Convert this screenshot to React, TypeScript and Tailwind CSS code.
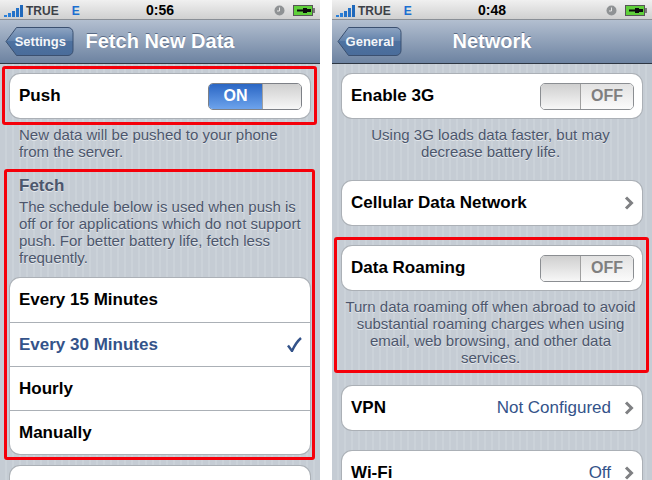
import type { ReactNode } from 'react';

function Signal() {
  return (
    <svg width="20" height="14" viewBox="0 0 20 14" className="shrink-0">
      <rect x="0" y="11" width="3" height="2" fill="#2a7fd8" />
      <rect x="4" y="9" width="3" height="4" fill="#2a7fd8" />
      <rect x="8" y="7" width="3" height="6" fill="#2472c8" />
      <rect x="12" y="4" width="3" height="9" fill="#2472c8" />
      <rect x="16" y="1" width="3" height="12" fill="#1f68bb" />
    </svg>
  );
}

function Clock() {
  return (
    <svg width="11" height="11" viewBox="0 0 11 11">
      <circle cx="5.5" cy="5.5" r="5" fill="#8f9294" />
      <path d="M5.5 2.5V6H3" stroke="#e6e6e6" strokeWidth="1" fill="none" />
    </svg>
  );
}

function Battery() {
  return (
    <svg width="23" height="11" viewBox="0 0 23 11">
      <rect x="0.5" y="0.5" width="19" height="10" fill="#5fd03a" stroke="#555" />
      <rect x="20" y="3" width="2" height="5" fill="#777" />
      <path d="M4 4.5H10V3H14V4H18V7H14V8H10V6.5H4Z" fill="#0b0b0b" />
    </svg>
  );
}

function StatusBar({ time }: { time: string }) {
  return (
    <div className="h-[20px] shrink-0 grid grid-cols-[1fr_auto_1fr] items-center px-[4px] bg-gradient-to-b from-[#f0f0f0] to-[#d0d0d0] border-b border-[#8a8f96]">
      <div className="flex items-center">
        <Signal />
        <span className="ml-[2px] text-[12px] font-bold text-[#3d4148]">TRUE</span>
        <span className="ml-[13px] text-[12px] font-bold text-[#1c6fd0]">E</span>
      </div>
      <span className="text-[14px] font-bold text-black">{time}</span>
      <div className="flex items-center justify-end gap-[8px]">
        <Clock />
        <Battery />
      </div>
    </div>
  );
}

function BackButton({ label, width, className }: { label: string; width: number; className: string }) {
  const d = `M11.5 .5H${width - 6}a5 5 0 0 1 5 5V23.5a5 5 0 0 1-5 5H11.5L1 14.5Z`;
  return (
    <div className={`relative h-[29px] flex items-center justify-end pr-[8px] ${className}`}>
      <svg width={width} height="29" viewBox={`0 0 ${width} 29`} className="absolute left-0 top-0">
        <defs>
          <linearGradient id={`back-${label}`} x1="0" y1="0" x2="0" y2="1">
            <stop offset="0" stopColor="#8ea4c2" />
            <stop offset="0.5" stopColor="#5f80aa" />
            <stop offset="0.5" stopColor="#4e72a0" />
            <stop offset="1" stopColor="#4a6c9a" />
          </linearGradient>
        </defs>
        <path d={d} fill={`url(#back-${label})`} stroke="#3b5070" />
      </svg>
      <span className="relative text-[13px] font-bold text-[#f4f6f9]">{label}</span>
    </div>
  );
}

function NavBar({ title, back, backWidth, backClass }: { title: string; back: string; backWidth: number; backClass: string }) {
  return (
    <div className="h-[44px] shrink-0 grid grid-cols-[1fr_auto_1fr] items-center px-[5px] bg-gradient-to-b from-[#b3bfd0] to-[#6d83a1] border-b border-[#2d3642]">
      <BackButton label={back} width={backWidth} className={backClass} />
      <h1 className="text-[20px] font-bold text-white pb-[2px] [text-shadow:0_-1px_0_#5a6b85]">{title}</h1>
      <div />
    </div>
  );
}

function Toggle({ on }: { on: boolean }) {
  return on ? (
    <div className="w-[94px] h-[27px] flex rounded-[5px] border border-[#7d8086] overflow-hidden">
      <div className="w-[53px] flex items-center justify-center text-[16px] font-bold text-white bg-gradient-to-b from-[#2a66c4] to-[#6da3ec]">ON</div>
      <div className="flex-1 bg-gradient-to-b from-[#cfcfcf] to-[#f7f7f7] border-l border-[#a0a0a0]" />
    </div>
  ) : (
    <div className="w-[94px] h-[27px] flex rounded-[5px] border border-[#8b8e92] overflow-hidden">
      <div className="w-[40px] bg-gradient-to-b from-[#cfcfcf] to-[#f7f7f7] border-r border-[#a0a0a0]" />
      <div className="flex-1 flex items-center justify-center text-[16px] font-bold text-[#7f7f7f] bg-gradient-to-b from-[#e2e2e2] to-[#fbfbfb]">OFF</div>
    </div>
  );
}

function Chevron() {
  return (
    <svg width="10" height="14" viewBox="0 0 10 14" className="shrink-0">
      <path d="M2 1.5L7.5 7L2 12.5" stroke="#7f8083" strokeWidth="3" fill="none" />
    </svg>
  );
}

function Check() {
  return (
    <svg width="15" height="15" viewBox="0 0 15 15" className="shrink-0">
      <path d="M1 8.5L5 14C7.5 8.5 10 4.5 14 1" stroke="#34538a" strokeWidth="2.4" fill="none" />
    </svg>
  );
}

function Row({ label, right, blue, divided }: { label: string; right?: ReactNode; blue?: boolean; divided?: boolean }) {
  return (
    <div className={`h-[44px] flex items-center justify-between pl-[9px] pr-[8px] text-[17px] font-bold ${blue ? 'text-[#34538a]' : 'text-black'} ${divided ? 'border-t border-[#abb0b6]' : ''}`}>
      <span>{label}</span>
      {right}
    </div>
  );
}

function Card({ children, className = '' }: { children?: ReactNode; className?: string }) {
  return (
    <div className={`shrink-0 bg-white ring-1 ring-[#abb0b6] rounded-[10px] overflow-hidden ${className}`}>{children}</div>
  );
}

function Note({ children, className = '' }: { children: ReactNode; className?: string }) {
  return (
    <p className={`text-[15px] leading-[17px] text-[#4c566c] [text-shadow:0_1px_0_#e4e8ec] ${className}`}>{children}</p>
  );
}

function Value({ text }: { text: string }) {
  return (
    <span className="flex items-center gap-[13px] text-[17px] font-normal text-[#34538a]">
      {text}
      <Chevron />
    </span>
  );
}

function RedBox({ className }: { className: string }) {
  return <div className={`absolute z-10 border-[3px] border-[#f5000a] rounded-[3px] pointer-events-none ${className}`} />;
}

function Phone({ children }: { children: ReactNode }) {
  return (
    <div className="w-[320px] h-[480px] shrink-0 overflow-hidden flex flex-col">{children}</div>
  );
}

const stripes = 'flex-1 px-[10px] bg-[repeating-linear-gradient(90deg,#c5ccd4_0px,#c5ccd4_5px,#cbd2d9_5px,#cbd2d9_7px)]';

export default function App() {
  return (
    <div className="w-[652px] h-[480px] overflow-hidden bg-white flex justify-between font-['Liberation_Sans',Arial,sans-serif]">
      <Phone>
        <StatusBar time="0:56" />
        <NavBar title="Fetch New Data" back="Settings" backWidth={69} backClass="w-[69px]" />
        <div className={stripes}>
          <div className="relative mt-[10px]">
            <RedBox className="-left-[8px] -right-[7px] -top-[8px] -bottom-[7px]" />
            <Card>
              <Row label="Push" right={<Toggle on />} />
            </Card>
          </div>
          <Note className="mt-[8px] px-[9px]">
            New data will be pushed to your phone
            <br />
            from the server.
          </Note>
          <div className="relative mt-[14px]">
            <RedBox className="-left-[6px] -right-[5px] -top-[5px] -bottom-[6px]" />
            <h2 className="pl-[9px] text-[17px] leading-[24px] font-bold text-[#4c566c] [text-shadow:0_1px_0_#e4e8ec]">Fetch</h2>
            <Note className="px-[9px]">
              The schedule below is used when push is off or for applications which do not support push. For better battery life, fetch less frequently.
            </Note>
            <Card className="mt-[12px]">
              <Row label="Every 15 Minutes" />
              <Row label="Every 30 Minutes" blue divided right={<Check />} />
              <Row label="Hourly" divided />
              <Row label="Manually" divided />
            </Card>
          </div>
          <Card className="mt-[12px] h-[44px]" />
        </div>
      </Phone>
      <Phone>
        <StatusBar time="0:48" />
        <NavBar title="Network" back="General" backWidth={65} backClass="w-[65px]" />
        <div className={stripes}>
          <Card className="mt-[10px]">
            <Row label="Enable 3G" right={<Toggle on={false} />} />
          </Card>
          <Note className="mt-[8px] pr-[3px] text-center">
            Using 3G loads data faster, but may
            <br />
            decrease battery life.
          </Note>
          <Card className="mt-[21px]">
            <Row label="Cellular Data Network" right={<Chevron />} />
          </Card>
          <div className="relative mt-[21px]">
            <RedBox className="-left-[8px] -right-[7px] -top-[9px] -bottom-[7px]" />
            <Card>
              <Row label="Data Roaming" right={<Toggle on={false} />} />
            </Card>
            <Note className="mt-[8px] pr-[3px] text-center">
              Turn data roaming off when abroad to avoid
              <br />
              substantial roaming charges when using
              <br />
              email, web browsing, and other data
              <br />
              services.
            </Note>
          </div>
          <Card className="mt-[20px]">
            <Row label="VPN" right={<Value text="Not Configured" />} />
          </Card>
          <Card className="mt-[21px]">
            <Row label="Wi-Fi" right={<Value text="Off" />} />
          </Card>
        </div>
      </Phone>
    </div>
  );
}
